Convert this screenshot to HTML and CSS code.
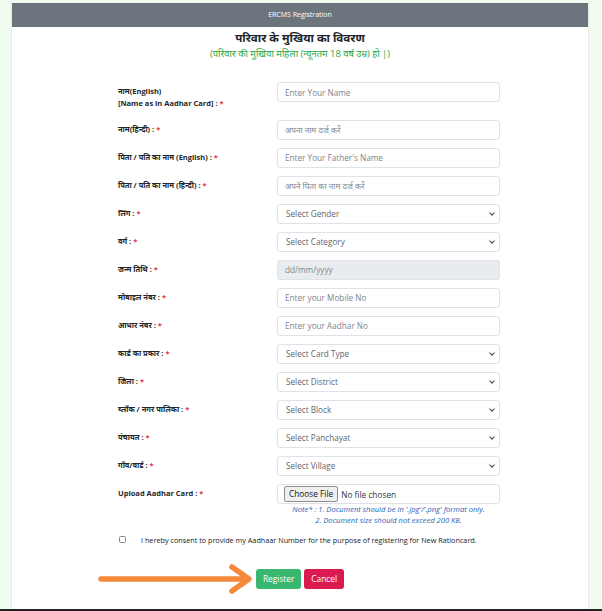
FILE: index.html
```html
<!DOCTYPE html>
<html lang="hi">
  <head>
    <meta charset="UTF-8" />
    <meta name="viewport" content="width=device-width, initial-scale=1.0" />
    <title>ERCMS Registration</title>
    <link rel="stylesheet" href="styles.css">
  </head>
  <body>
    <div class="page">
      <div class="card">
        <div class="card-header">ERCMS Registration</div>
        <div class="card-body">
          <h3 class="title">परिवार के मुखिया का विवरण</h3>
          <p class="subtitle">(परिवार की मुखिया महिला (न्यूनतम 18 वर्ष उम्र) हो |)</p>

          <form class="reg-form">
            <div class="form-row">
              <label for="nameEn">नाम(English)<br />[Name as in Aadhar Card] : <span class="req">*</span></label>
              <div class="field"><input type="text" id="nameEn" placeholder="Enter Your Name" /></div>
            </div>
            <div class="form-row">
              <label for="nameHi">नाम(हिन्दी) : <span class="req">*</span></label>
              <div class="field"><input type="text" id="nameHi" placeholder="अपना नाम दर्ज करें" /></div>
            </div>
            <div class="form-row">
              <label for="fatherEn">पिता / पति का नाम (English) : <span class="req">*</span></label>
              <div class="field"><input type="text" id="fatherEn" placeholder="Enter Your Father's Name" /></div>
            </div>
            <div class="form-row">
              <label for="fatherHi">पिता / पति का नाम (हिन्दी) : <span class="req">*</span></label>
              <div class="field"><input type="text" id="fatherHi" placeholder="अपने पिता का नाम दर्ज करें" /></div>
            </div>
            <div class="form-row">
              <label for="gender">लिंग : <span class="req">*</span></label>
              <div class="field select-wrap">
                <select id="gender"><option>Select Gender</option></select>
              </div>
            </div>
            <div class="form-row">
              <label for="category">वर्ग : <span class="req">*</span></label>
              <div class="field select-wrap">
                <select id="category"><option>Select Category</option></select>
              </div>
            </div>
            <div class="form-row">
              <label for="dob">जन्म तिथि : <span class="req">*</span></label>
              <div class="field"><input type="text" id="dob" class="readonly" placeholder="dd/mm/yyyy" readonly /></div>
            </div>
            <div class="form-row">
              <label for="mobile">मोबाइल नंबर : <span class="req">*</span></label>
              <div class="field"><input type="text" id="mobile" placeholder="Enter your Mobile No" /></div>
            </div>
            <div class="form-row">
              <label for="aadhar">आधार नंबर : <span class="req">*</span></label>
              <div class="field"><input type="text" id="aadhar" placeholder="Enter your Aadhar No" /></div>
            </div>
            <div class="form-row">
              <label for="cardType">कार्ड का प्रकार : <span class="req">*</span></label>
              <div class="field select-wrap">
                <select id="cardType"><option>Select Card Type</option></select>
              </div>
            </div>
            <div class="form-row">
              <label for="district">जिला : <span class="req">*</span></label>
              <div class="field select-wrap">
                <select id="district"><option>Select District</option></select>
              </div>
            </div>
            <div class="form-row">
              <label for="block">ब्लॉक / नगर पालिका : <span class="req">*</span></label>
              <div class="field select-wrap">
                <select id="block"><option>Select Block</option></select>
              </div>
            </div>
            <div class="form-row">
              <label for="panchayat">पंचायत : <span class="req">*</span></label>
              <div class="field select-wrap">
                <select id="panchayat"><option>Select Panchayat</option></select>
              </div>
            </div>
            <div class="form-row">
              <label for="village">गाँव/वार्ड : <span class="req">*</span></label>
              <div class="field select-wrap">
                <select id="village"><option>Select Village</option></select>
              </div>
            </div>
            <div class="form-row">
              <label for="aadharFile">Upload Aadhar Card : <span class="req">*</span></label>
              <div class="field">
                <input type="file" id="aadharFile" />
                <p class="note">
                  Note* : 1. Document should be in '.jpg'/'.png' format only.<br />
                  2. Document size should not exceed 200 KB.
                </p>
              </div>
            </div>

            <div class="consent">
              <input type="checkbox" id="consent" />
              <label for="consent">I hereby consent to provide my Aadhaar Number for the purpose of registering for New Rationcard.</label>
            </div>

            <div class="actions">
              <svg class="pointer" width="160" height="30" viewBox="0 0 160 30">
                <path d="M3 15 H150 M134 3 L151 15 L134 27" fill="none" stroke="#f68a3b" stroke-width="5.5" stroke-linecap="round" stroke-linejoin="round" />
              </svg>
              <button type="button" class="btn btn-success">Register</button>
              <button type="button" class="btn btn-danger">Cancel</button>
            </div>
          </form>
        </div>
      </div>
    </div>
  </body>
</html>
```

FILE: styles.css
```css
html, body {
  margin: 0;
  height: 100%;
  overflow: hidden;
}

body {
  background: #effcef;
  font-family: "Open Sans", "Noto Sans", sans-serif;
  color: #212529;
  border-bottom: 2px solid #222;
  box-sizing: border-box;
}

.page {
  height: 100%;
  padding-top: 3px;
  box-sizing: border-box;
}

.card {
  margin-left: 11px;
  width: 578px;
  height: 100%;
  background: #fff;
  border-left: 1px solid #e9ece9;
  border-right: 1px solid #e9ece9;
  box-sizing: border-box;
}

.card-header {
  height: 24px;
  line-height: 24px;
  background: #6c757d;
  color: #fff;
  font-size: 7px;
  text-align: center;
}

.title {
  margin: 2px 0 0;
  font-size: 11.6px;
  line-height: 18px;
  font-weight: 700;
  text-align: center;
}

.subtitle {
  margin: 0;
  font-size: 9.4px;
  line-height: 14px;
  color: #28a745;
  text-align: center;
}

.reg-form {
  margin-top: 21px;
}

.form-row {
  display: flex;
  margin-left: 106px;
  margin-bottom: 8px;
}

.form-row label {
  width: 159px;
  flex-shrink: 0;
  padding: 3px 0 2px;
  font-size: 7.5px;
  line-height: 12.4px;
  font-weight: 700;
}

.req {
  color: #dc3545;
}

.field {
  width: 223px;
  position: relative;
}

.field input[type="text"],
.field select {
  display: block;
  width: 100%;
  height: 20px;
  box-sizing: border-box;
  padding: 0 7px;
  border: 1px solid #dfe3e7;
  border-radius: 3px;
  background: #fff;
  font-family: "Open Sans", "Noto Sans", sans-serif;
  font-size: 8.2px;
  color: #495057;
  outline: none;
}

.field input::placeholder {
  color: #7d858c;
}

.field select {
  appearance: none;
  padding-left: 8px;
  color: #5f666d;
}

.select-wrap::after {
  content: "";
  position: absolute;
  right: 6px;
  top: 7px;
  width: 3px;
  height: 3px;
  border-right: 1.2px solid #444;
  border-bottom: 1.2px solid #444;
  transform: rotate(45deg);
  pointer-events: none;
}

.field input.readonly {
  background: #e9ecef;
}

.field input[type="file"] {
  display: block;
  width: 100%;
  height: 20px;
  box-sizing: border-box;
  padding: 1px 6px;
  border: 1px solid #dfe3e7;
  border-radius: 3px;
  font-family: "Open Sans", "Noto Sans", sans-serif;
  font-size: 8.3px;
  color: #333;
}

.field input[type="file"]::file-selector-button {
  height: 16px;
  margin-right: 3px;
  padding: 0 4px;
  border: 1px solid #8f8f8f;
  border-radius: 2px;
  background: #efefef;
  font-family: "Open Sans", "Noto Sans", sans-serif;
  font-size: 8.3px;
  color: #111;
}

.note {
  margin: 0;
  font-size: 7.6px;
  line-height: 11px;
  font-style: italic;
  color: #1f63b5;
  text-align: center;
}

.consent {
  display: flex;
  align-items: center;
  margin: 5px 0 0 107px;
}

.consent input {
  appearance: none;
  width: 7px;
  height: 7px;
  margin: 0 15px 0 0;
  border: 1px solid #8a8a8a;
  border-radius: 1.5px;
  box-sizing: border-box;
}

.consent label {
  font-size: 7.25px;
  line-height: 12px;
  color: #222;
}

.actions {
  position: relative;
  display: flex;
  justify-content: center;
  gap: 3px;
  margin-top: 23px;
}

.pointer {
  position: absolute;
  left: 86px;
  top: -5px;
}

.btn {
  height: 20px;
  padding: 0 7px;
  border: none;
  border-radius: 3px;
  font-family: "Open Sans", "Noto Sans", sans-serif;
  font-size: 8.3px;
  color: #fff;
}

.btn-success {
  background: #38b771;
}

.btn-danger {
  background: #db1a4f;
}
```
